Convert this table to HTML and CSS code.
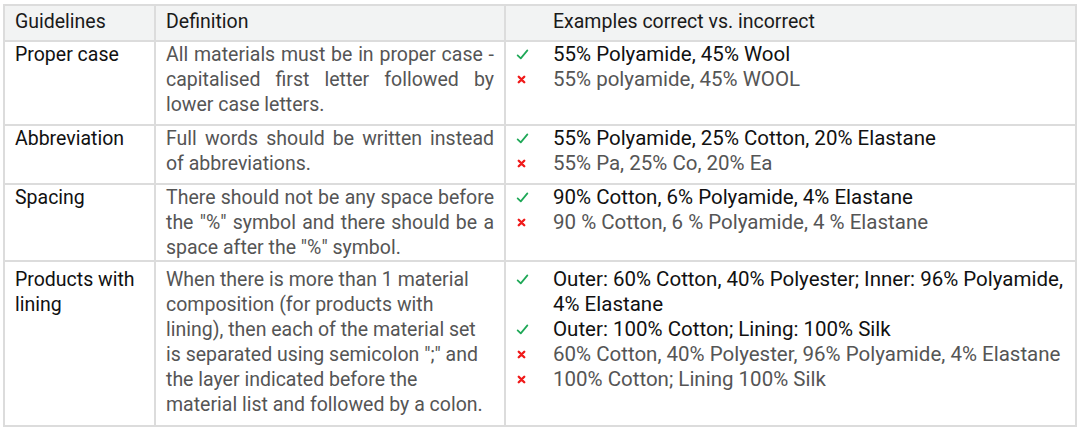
FILE: index.html
```html
<!DOCTYPE html>
<html>
<head>
<meta charset="utf-8">
<link rel="stylesheet" href="styles.css">
</head>
<body>
<div class="page">
<table class="guide">
  <colgroup>
    <col class="c1"><col class="c2"><col class="c3">
  </colgroup>
  <thead>
    <tr class="head">
      <th>Guidelines</th>
      <th>Definition</th>
      <th class="ex-head">Examples correct vs. incorrect</th>
    </tr>
  </thead>
  <tbody>
    <tr class="r1">
      <td class="name">Proper case</td>
      <td class="def justify">All materials must be in proper case - capitalised first letter followed by lower case letters.</td>
      <td class="ex">
        <div class="item ok"><span class="mark"><svg viewBox="0 0 12 12"><path d="M1.5 6.8 L4.4 9.6 L10.5 2.2" /></svg></span><span>55% Polyamide, 45% Wool</span></div>
        <div class="item bad"><span class="mark"><svg viewBox="0 0 12 12"><path d="M3 3 L9 9 M9 3 L3 9" /></svg></span><span>55% polyamide, 45% WOOL</span></div>
      </td>
    </tr>
    <tr class="r2">
      <td class="name">Abbreviation</td>
      <td class="def justify">Full words should be written instead of abbreviations.</td>
      <td class="ex">
        <div class="item ok"><span class="mark"><svg viewBox="0 0 12 12"><path d="M1.5 6.8 L4.4 9.6 L10.5 2.2" /></svg></span><span>55% Polyamide, 25% Cotton, 20% Elastane</span></div>
        <div class="item bad"><span class="mark"><svg viewBox="0 0 12 12"><path d="M3 3 L9 9 M9 3 L3 9" /></svg></span><span>55% Pa, 25% Co, 20% Ea</span></div>
      </td>
    </tr>
    <tr class="r3">
      <td class="name">Spacing</td>
      <td class="def justify">There should not be any space before the "%" symbol and there should be a space after the "%" symbol.</td>
      <td class="ex">
        <div class="item ok"><span class="mark"><svg viewBox="0 0 12 12"><path d="M1.5 6.8 L4.4 9.6 L10.5 2.2" /></svg></span><span>90% Cotton, 6% Polyamide, 4% Elastane</span></div>
        <div class="item bad"><span class="mark"><svg viewBox="0 0 12 12"><path d="M3 3 L9 9 M9 3 L3 9" /></svg></span><span>90 % Cotton, 6 % Polyamide, 4 % Elastane</span></div>
      </td>
    </tr>
    <tr class="r4">
      <td class="name">Products with lining</td>
      <td class="def def-left">When there is more than 1 material composition (for products with lining), then each of the material set is separated using semicolon ";" and the layer indicated before the material list and followed by a colon.</td>
      <td class="ex">
        <div class="item ok"><span class="mark"><svg viewBox="0 0 12 12"><path d="M1.5 6.8 L4.4 9.6 L10.5 2.2" /></svg></span><span>Outer: 60% Cotton, 40% Polyester; Inner: 96% Polyamide, 4% Elastane</span></div>
        <div class="item ok"><span class="mark"><svg viewBox="0 0 12 12"><path d="M1.5 6.8 L4.4 9.6 L10.5 2.2" /></svg></span><span>Outer: 100% Cotton; Lining: 100% Silk</span></div>
        <div class="item bad"><span class="mark"><svg viewBox="0 0 12 12"><path d="M3 3 L9 9 M9 3 L3 9" /></svg></span><span>60% Cotton, 40% Polyester, 96% Polyamide, 4% Elastane</span></div>
        <div class="item bad"><span class="mark"><svg viewBox="0 0 12 12"><path d="M3 3 L9 9 M9 3 L3 9" /></svg></span><span>100% Cotton; Lining 100% Silk</span></div>
      </td>
    </tr>
  </tbody>
</table>
</div>
</body>
</html>
```
FILE: styles.css
```css
html, body {
  margin: 0;
  padding: 0;
  background: #ffffff;
}
.page {
  padding: 4px 3px 0 3px;
}
.guide {
  border-collapse: collapse;
  width: 1074px;
  table-layout: fixed;
  font-family: Roboto, "Noto Sans", sans-serif;
  font-size: 19.5px;
  line-height: 25px;
  color: #111111;
}
.c1 { width: 151px; }
.c2 { width: 350px; }
.guide th, .guide td {
  border: 2px solid #dcdcdc;
  vertical-align: top;
  padding: 0 10px 0 10px;
  text-align: left;
}
.guide th {
  font-weight: normal;
  background: #f2f3f3;
  height: 31px;
  vertical-align: middle;
  padding-bottom: 3px;
  color: #1a1a1a;
}
.guide th.ex-head {
  padding-left: 47px;
}
.r1 { height: 84px; }
.r2 { height: 59px; }
.r3 { height: 77px; }
.r4 { height: 165px; }
.r4 td { padding-top: 5px; }
.def {
  color: #555555;
}
.guide td.def-left {
  padding-right: 18px;
}
.justify {
  text-align: justify !important;
}
.ex {
  padding-left: 10px;
  padding-right: 4px !important;
  font-size: 20.5px;
}
.item {
  display: flex;
  align-items: flex-start;
}
.mark {
  flex: 0 0 37px;
  height: 25px;
  display: flex;
  align-items: center;
}
.mark svg {
  width: 13px;
  height: 13px;
  fill: none;
}
.ok .mark svg path {
  stroke: #1ea857;
  stroke-width: 1.6;
  stroke-linecap: round;
  stroke-linejoin: round;
}
.bad .mark svg {
  width: 11px;
  height: 11px;
}
.bad .mark svg path {
  stroke: #f01a1a;
  stroke-width: 2.6;
  stroke-linecap: round;
}
.ok { color: #111111; }
.bad { color: #555555; }
```
